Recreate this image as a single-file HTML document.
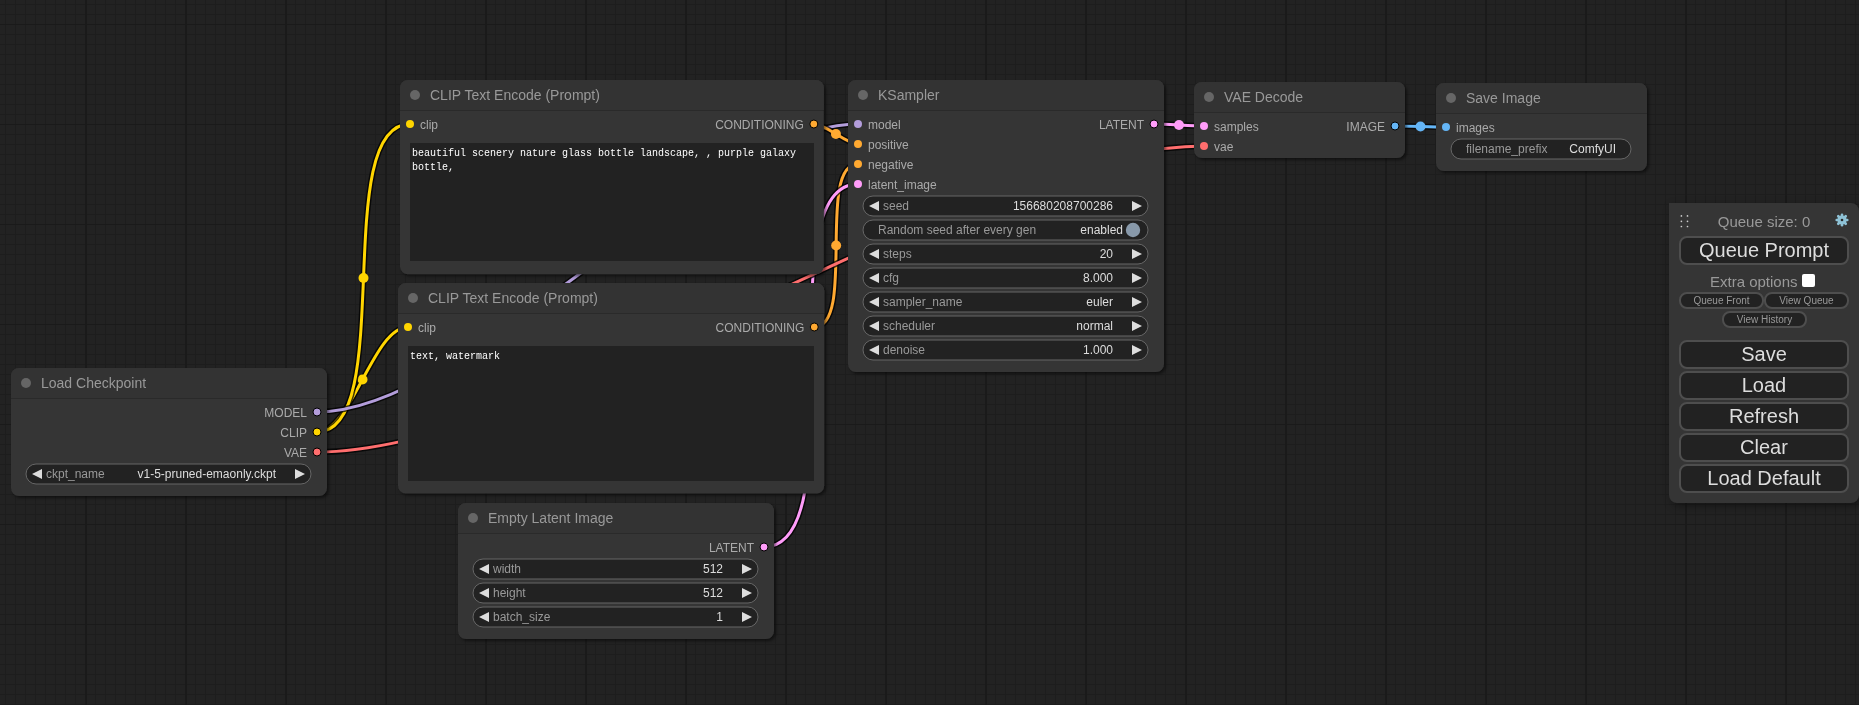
<!DOCTYPE html><html><head><meta charset="utf-8"><style>
html,body{margin:0;padding:0;width:1859px;height:705px;overflow:hidden;background:#222;}
svg.c{position:absolute;left:0;top:0;will-change:transform;}
text{font-family:"Liberation Sans",sans-serif;}
.ta{position:absolute;background:#222;color:#fff;font-family:"Liberation Mono",monospace;font-size:10px;line-height:14px;padding:4px 2px 2px 2px;will-change:transform;box-sizing:border-box;white-space:pre-wrap;word-wrap:break-word;overflow:hidden;}
.menu{position:absolute;left:1669px;top:203px;width:190px;height:300px;box-sizing:border-box;background:#353535;border-radius:0 8px 8px 8px;font-family:"Liberation Sans",sans-serif;color:#999;box-shadow:3px 3px 8px rgba(0,0,0,0.4);will-change:transform;}
.menu button{font-family:"Liberation Sans",sans-serif;display:block;box-sizing:border-box;background:#222;color:#ddd;border:2px solid #4e4e4e;border-radius:8px;padding:0;margin:0;}
.menu .big{position:absolute;left:10px;width:170px;height:29px;font-size:20px;line-height:25px;}
.qs{position:absolute;left:0;top:10px;width:190px;text-align:center;font-size:15px;line-height:18px;}
.drag{position:absolute;left:12px;top:3px;width:8px;height:12px;background-image:radial-gradient(circle,#bbb 0.8px,transparent 1px);background-size:5px 5px;}
.gear{position:absolute;left:166px;top:2px;}
.extra{position:absolute;left:41px;top:70px;width:120px;text-align:left;font-size:15px;line-height:18px;}
.cb{position:absolute;left:133px;top:71px;width:13px;height:13px;box-sizing:border-box;background:#fff;border-radius:2px;}
.menu .sm{position:absolute;font-size:10px;height:16.5px;line-height:12.5px;border-width:2px;border-radius:8px;color:#999;}
.menu .sm span{position:relative;top:1px;}

.menu .qp{top:34px}
</style></head><body><svg class="c" width="1859" height="705" viewBox="0 0 1859 705"><defs><filter id="sh" x="-10%" y="-10%" width="120%" height="120%"><feDropShadow dx="2" dy="2" stdDeviation="1.5" flood-color="#000" flood-opacity="0.5"/></filter></defs><g><rect x="5" y="0" width="1" height="705" fill="#1d1d1d"/><rect x="15" y="0" width="1" height="705" fill="#1d1d1d"/><rect x="25" y="0" width="1" height="705" fill="#1d1d1d"/><rect x="35" y="0" width="1" height="705" fill="#1d1d1d"/><rect x="45" y="0" width="1" height="705" fill="#1d1d1d"/><rect x="55" y="0" width="1" height="705" fill="#1d1d1d"/><rect x="65" y="0" width="1" height="705" fill="#1d1d1d"/><rect x="75" y="0" width="1" height="705" fill="#1d1d1d"/><rect x="95" y="0" width="1" height="705" fill="#1d1d1d"/><rect x="105" y="0" width="1" height="705" fill="#1d1d1d"/><rect x="115" y="0" width="1" height="705" fill="#1d1d1d"/><rect x="125" y="0" width="1" height="705" fill="#1d1d1d"/><rect x="135" y="0" width="1" height="705" fill="#1d1d1d"/><rect x="145" y="0" width="1" height="705" fill="#1d1d1d"/><rect x="155" y="0" width="1" height="705" fill="#1d1d1d"/><rect x="165" y="0" width="1" height="705" fill="#1d1d1d"/><rect x="175" y="0" width="1" height="705" fill="#1d1d1d"/><rect x="195" y="0" width="1" height="705" fill="#1d1d1d"/><rect x="205" y="0" width="1" height="705" fill="#1d1d1d"/><rect x="215" y="0" width="1" height="705" fill="#1d1d1d"/><rect x="225" y="0" width="1" height="705" fill="#1d1d1d"/><rect x="235" y="0" width="1" height="705" fill="#1d1d1d"/><rect x="245" y="0" width="1" height="705" fill="#1d1d1d"/><rect x="255" y="0" width="1" height="705" fill="#1d1d1d"/><rect x="265" y="0" width="1" height="705" fill="#1d1d1d"/><rect x="275" y="0" width="1" height="705" fill="#1d1d1d"/><rect x="295" y="0" width="1" height="705" fill="#1d1d1d"/><rect x="305" y="0" width="1" height="705" fill="#1d1d1d"/><rect x="315" y="0" width="1" height="705" fill="#1d1d1d"/><rect x="325" y="0" width="1" height="705" fill="#1d1d1d"/><rect x="335" y="0" width="1" height="705" fill="#1d1d1d"/><rect x="345" y="0" width="1" height="705" fill="#1d1d1d"/><rect x="355" y="0" width="1" height="705" fill="#1d1d1d"/><rect x="365" y="0" width="1" height="705" fill="#1d1d1d"/><rect x="375" y="0" width="1" height="705" fill="#1d1d1d"/><rect x="395" y="0" width="1" height="705" fill="#1d1d1d"/><rect x="405" y="0" width="1" height="705" fill="#1d1d1d"/><rect x="415" y="0" width="1" height="705" fill="#1d1d1d"/><rect x="425" y="0" width="1" height="705" fill="#1d1d1d"/><rect x="435" y="0" width="1" height="705" fill="#1d1d1d"/><rect x="445" y="0" width="1" height="705" fill="#1d1d1d"/><rect x="455" y="0" width="1" height="705" fill="#1d1d1d"/><rect x="465" y="0" width="1" height="705" fill="#1d1d1d"/><rect x="475" y="0" width="1" height="705" fill="#1d1d1d"/><rect x="495" y="0" width="1" height="705" fill="#1d1d1d"/><rect x="505" y="0" width="1" height="705" fill="#1d1d1d"/><rect x="515" y="0" width="1" height="705" fill="#1d1d1d"/><rect x="525" y="0" width="1" height="705" fill="#1d1d1d"/><rect x="535" y="0" width="1" height="705" fill="#1d1d1d"/><rect x="545" y="0" width="1" height="705" fill="#1d1d1d"/><rect x="555" y="0" width="1" height="705" fill="#1d1d1d"/><rect x="565" y="0" width="1" height="705" fill="#1d1d1d"/><rect x="575" y="0" width="1" height="705" fill="#1d1d1d"/><rect x="595" y="0" width="1" height="705" fill="#1d1d1d"/><rect x="605" y="0" width="1" height="705" fill="#1d1d1d"/><rect x="615" y="0" width="1" height="705" fill="#1d1d1d"/><rect x="625" y="0" width="1" height="705" fill="#1d1d1d"/><rect x="635" y="0" width="1" height="705" fill="#1d1d1d"/><rect x="645" y="0" width="1" height="705" fill="#1d1d1d"/><rect x="655" y="0" width="1" height="705" fill="#1d1d1d"/><rect x="665" y="0" width="1" height="705" fill="#1d1d1d"/><rect x="675" y="0" width="1" height="705" fill="#1d1d1d"/><rect x="695" y="0" width="1" height="705" fill="#1d1d1d"/><rect x="705" y="0" width="1" height="705" fill="#1d1d1d"/><rect x="715" y="0" width="1" height="705" fill="#1d1d1d"/><rect x="725" y="0" width="1" height="705" fill="#1d1d1d"/><rect x="735" y="0" width="1" height="705" fill="#1d1d1d"/><rect x="745" y="0" width="1" height="705" fill="#1d1d1d"/><rect x="755" y="0" width="1" height="705" fill="#1d1d1d"/><rect x="765" y="0" width="1" height="705" fill="#1d1d1d"/><rect x="775" y="0" width="1" height="705" fill="#1d1d1d"/><rect x="795" y="0" width="1" height="705" fill="#1d1d1d"/><rect x="805" y="0" width="1" height="705" fill="#1d1d1d"/><rect x="815" y="0" width="1" height="705" fill="#1d1d1d"/><rect x="825" y="0" width="1" height="705" fill="#1d1d1d"/><rect x="835" y="0" width="1" height="705" fill="#1d1d1d"/><rect x="845" y="0" width="1" height="705" fill="#1d1d1d"/><rect x="855" y="0" width="1" height="705" fill="#1d1d1d"/><rect x="865" y="0" width="1" height="705" fill="#1d1d1d"/><rect x="875" y="0" width="1" height="705" fill="#1d1d1d"/><rect x="895" y="0" width="1" height="705" fill="#1d1d1d"/><rect x="905" y="0" width="1" height="705" fill="#1d1d1d"/><rect x="915" y="0" width="1" height="705" fill="#1d1d1d"/><rect x="925" y="0" width="1" height="705" fill="#1d1d1d"/><rect x="935" y="0" width="1" height="705" fill="#1d1d1d"/><rect x="945" y="0" width="1" height="705" fill="#1d1d1d"/><rect x="955" y="0" width="1" height="705" fill="#1d1d1d"/><rect x="965" y="0" width="1" height="705" fill="#1d1d1d"/><rect x="975" y="0" width="1" height="705" fill="#1d1d1d"/><rect x="995" y="0" width="1" height="705" fill="#1d1d1d"/><rect x="1005" y="0" width="1" height="705" fill="#1d1d1d"/><rect x="1015" y="0" width="1" height="705" fill="#1d1d1d"/><rect x="1025" y="0" width="1" height="705" fill="#1d1d1d"/><rect x="1035" y="0" width="1" height="705" fill="#1d1d1d"/><rect x="1045" y="0" width="1" height="705" fill="#1d1d1d"/><rect x="1055" y="0" width="1" height="705" fill="#1d1d1d"/><rect x="1065" y="0" width="1" height="705" fill="#1d1d1d"/><rect x="1075" y="0" width="1" height="705" fill="#1d1d1d"/><rect x="1095" y="0" width="1" height="705" fill="#1d1d1d"/><rect x="1105" y="0" width="1" height="705" fill="#1d1d1d"/><rect x="1115" y="0" width="1" height="705" fill="#1d1d1d"/><rect x="1125" y="0" width="1" height="705" fill="#1d1d1d"/><rect x="1135" y="0" width="1" height="705" fill="#1d1d1d"/><rect x="1145" y="0" width="1" height="705" fill="#1d1d1d"/><rect x="1155" y="0" width="1" height="705" fill="#1d1d1d"/><rect x="1165" y="0" width="1" height="705" fill="#1d1d1d"/><rect x="1175" y="0" width="1" height="705" fill="#1d1d1d"/><rect x="1195" y="0" width="1" height="705" fill="#1d1d1d"/><rect x="1205" y="0" width="1" height="705" fill="#1d1d1d"/><rect x="1215" y="0" width="1" height="705" fill="#1d1d1d"/><rect x="1225" y="0" width="1" height="705" fill="#1d1d1d"/><rect x="1235" y="0" width="1" height="705" fill="#1d1d1d"/><rect x="1245" y="0" width="1" height="705" fill="#1d1d1d"/><rect x="1255" y="0" width="1" height="705" fill="#1d1d1d"/><rect x="1265" y="0" width="1" height="705" fill="#1d1d1d"/><rect x="1275" y="0" width="1" height="705" fill="#1d1d1d"/><rect x="1295" y="0" width="1" height="705" fill="#1d1d1d"/><rect x="1305" y="0" width="1" height="705" fill="#1d1d1d"/><rect x="1315" y="0" width="1" height="705" fill="#1d1d1d"/><rect x="1325" y="0" width="1" height="705" fill="#1d1d1d"/><rect x="1335" y="0" width="1" height="705" fill="#1d1d1d"/><rect x="1345" y="0" width="1" height="705" fill="#1d1d1d"/><rect x="1355" y="0" width="1" height="705" fill="#1d1d1d"/><rect x="1365" y="0" width="1" height="705" fill="#1d1d1d"/><rect x="1375" y="0" width="1" height="705" fill="#1d1d1d"/><rect x="1395" y="0" width="1" height="705" fill="#1d1d1d"/><rect x="1405" y="0" width="1" height="705" fill="#1d1d1d"/><rect x="1415" y="0" width="1" height="705" fill="#1d1d1d"/><rect x="1425" y="0" width="1" height="705" fill="#1d1d1d"/><rect x="1435" y="0" width="1" height="705" fill="#1d1d1d"/><rect x="1445" y="0" width="1" height="705" fill="#1d1d1d"/><rect x="1455" y="0" width="1" height="705" fill="#1d1d1d"/><rect x="1465" y="0" width="1" height="705" fill="#1d1d1d"/><rect x="1475" y="0" width="1" height="705" fill="#1d1d1d"/><rect x="1495" y="0" width="1" height="705" fill="#1d1d1d"/><rect x="1505" y="0" width="1" height="705" fill="#1d1d1d"/><rect x="1515" y="0" width="1" height="705" fill="#1d1d1d"/><rect x="1525" y="0" width="1" height="705" fill="#1d1d1d"/><rect x="1535" y="0" width="1" height="705" fill="#1d1d1d"/><rect x="1545" y="0" width="1" height="705" fill="#1d1d1d"/><rect x="1555" y="0" width="1" height="705" fill="#1d1d1d"/><rect x="1565" y="0" width="1" height="705" fill="#1d1d1d"/><rect x="1575" y="0" width="1" height="705" fill="#1d1d1d"/><rect x="1595" y="0" width="1" height="705" fill="#1d1d1d"/><rect x="1605" y="0" width="1" height="705" fill="#1d1d1d"/><rect x="1615" y="0" width="1" height="705" fill="#1d1d1d"/><rect x="1625" y="0" width="1" height="705" fill="#1d1d1d"/><rect x="1635" y="0" width="1" height="705" fill="#1d1d1d"/><rect x="1645" y="0" width="1" height="705" fill="#1d1d1d"/><rect x="1655" y="0" width="1" height="705" fill="#1d1d1d"/><rect x="1665" y="0" width="1" height="705" fill="#1d1d1d"/><rect x="1675" y="0" width="1" height="705" fill="#1d1d1d"/><rect x="1695" y="0" width="1" height="705" fill="#1d1d1d"/><rect x="1705" y="0" width="1" height="705" fill="#1d1d1d"/><rect x="1715" y="0" width="1" height="705" fill="#1d1d1d"/><rect x="1725" y="0" width="1" height="705" fill="#1d1d1d"/><rect x="1735" y="0" width="1" height="705" fill="#1d1d1d"/><rect x="1745" y="0" width="1" height="705" fill="#1d1d1d"/><rect x="1755" y="0" width="1" height="705" fill="#1d1d1d"/><rect x="1765" y="0" width="1" height="705" fill="#1d1d1d"/><rect x="1775" y="0" width="1" height="705" fill="#1d1d1d"/><rect x="1795" y="0" width="1" height="705" fill="#1d1d1d"/><rect x="1805" y="0" width="1" height="705" fill="#1d1d1d"/><rect x="1815" y="0" width="1" height="705" fill="#1d1d1d"/><rect x="1825" y="0" width="1" height="705" fill="#1d1d1d"/><rect x="1835" y="0" width="1" height="705" fill="#1d1d1d"/><rect x="1845" y="0" width="1" height="705" fill="#1d1d1d"/><rect x="1855" y="0" width="1" height="705" fill="#1d1d1d"/><rect x="0" y="4" width="1859" height="1" fill="#1d1d1d"/><rect x="0" y="14" width="1859" height="1" fill="#1d1d1d"/><rect x="0" y="34" width="1859" height="1" fill="#1d1d1d"/><rect x="0" y="44" width="1859" height="1" fill="#1d1d1d"/><rect x="0" y="54" width="1859" height="1" fill="#1d1d1d"/><rect x="0" y="64" width="1859" height="1" fill="#1d1d1d"/><rect x="0" y="74" width="1859" height="1" fill="#1d1d1d"/><rect x="0" y="84" width="1859" height="1" fill="#1d1d1d"/><rect x="0" y="94" width="1859" height="1" fill="#1d1d1d"/><rect x="0" y="104" width="1859" height="1" fill="#1d1d1d"/><rect x="0" y="114" width="1859" height="1" fill="#1d1d1d"/><rect x="0" y="134" width="1859" height="1" fill="#1d1d1d"/><rect x="0" y="144" width="1859" height="1" fill="#1d1d1d"/><rect x="0" y="154" width="1859" height="1" fill="#1d1d1d"/><rect x="0" y="164" width="1859" height="1" fill="#1d1d1d"/><rect x="0" y="174" width="1859" height="1" fill="#1d1d1d"/><rect x="0" y="184" width="1859" height="1" fill="#1d1d1d"/><rect x="0" y="194" width="1859" height="1" fill="#1d1d1d"/><rect x="0" y="204" width="1859" height="1" fill="#1d1d1d"/><rect x="0" y="214" width="1859" height="1" fill="#1d1d1d"/><rect x="0" y="234" width="1859" height="1" fill="#1d1d1d"/><rect x="0" y="244" width="1859" height="1" fill="#1d1d1d"/><rect x="0" y="254" width="1859" height="1" fill="#1d1d1d"/><rect x="0" y="264" width="1859" height="1" fill="#1d1d1d"/><rect x="0" y="274" width="1859" height="1" fill="#1d1d1d"/><rect x="0" y="284" width="1859" height="1" fill="#1d1d1d"/><rect x="0" y="294" width="1859" height="1" fill="#1d1d1d"/><rect x="0" y="304" width="1859" height="1" fill="#1d1d1d"/><rect x="0" y="314" width="1859" height="1" fill="#1d1d1d"/><rect x="0" y="334" width="1859" height="1" fill="#1d1d1d"/><rect x="0" y="344" width="1859" height="1" fill="#1d1d1d"/><rect x="0" y="354" width="1859" height="1" fill="#1d1d1d"/><rect x="0" y="364" width="1859" height="1" fill="#1d1d1d"/><rect x="0" y="374" width="1859" height="1" fill="#1d1d1d"/><rect x="0" y="384" width="1859" height="1" fill="#1d1d1d"/><rect x="0" y="394" width="1859" height="1" fill="#1d1d1d"/><rect x="0" y="404" width="1859" height="1" fill="#1d1d1d"/><rect x="0" y="414" width="1859" height="1" fill="#1d1d1d"/><rect x="0" y="434" width="1859" height="1" fill="#1d1d1d"/><rect x="0" y="444" width="1859" height="1" fill="#1d1d1d"/><rect x="0" y="454" width="1859" height="1" fill="#1d1d1d"/><rect x="0" y="464" width="1859" height="1" fill="#1d1d1d"/><rect x="0" y="474" width="1859" height="1" fill="#1d1d1d"/><rect x="0" y="484" width="1859" height="1" fill="#1d1d1d"/><rect x="0" y="494" width="1859" height="1" fill="#1d1d1d"/><rect x="0" y="504" width="1859" height="1" fill="#1d1d1d"/><rect x="0" y="514" width="1859" height="1" fill="#1d1d1d"/><rect x="0" y="534" width="1859" height="1" fill="#1d1d1d"/><rect x="0" y="544" width="1859" height="1" fill="#1d1d1d"/><rect x="0" y="554" width="1859" height="1" fill="#1d1d1d"/><rect x="0" y="564" width="1859" height="1" fill="#1d1d1d"/><rect x="0" y="574" width="1859" height="1" fill="#1d1d1d"/><rect x="0" y="584" width="1859" height="1" fill="#1d1d1d"/><rect x="0" y="594" width="1859" height="1" fill="#1d1d1d"/><rect x="0" y="604" width="1859" height="1" fill="#1d1d1d"/><rect x="0" y="614" width="1859" height="1" fill="#1d1d1d"/><rect x="0" y="634" width="1859" height="1" fill="#1d1d1d"/><rect x="0" y="644" width="1859" height="1" fill="#1d1d1d"/><rect x="0" y="654" width="1859" height="1" fill="#1d1d1d"/><rect x="0" y="664" width="1859" height="1" fill="#1d1d1d"/><rect x="0" y="674" width="1859" height="1" fill="#1d1d1d"/><rect x="0" y="684" width="1859" height="1" fill="#1d1d1d"/><rect x="0" y="694" width="1859" height="1" fill="#1d1d1d"/><rect x="0" y="704" width="1859" height="1" fill="#1d1d1d"/><rect x="85" y="0" width="2" height="705" fill="#1a1a1a"/><rect x="185" y="0" width="2" height="705" fill="#1a1a1a"/><rect x="285" y="0" width="2" height="705" fill="#1a1a1a"/><rect x="385" y="0" width="2" height="705" fill="#1a1a1a"/><rect x="485" y="0" width="2" height="705" fill="#1a1a1a"/><rect x="585" y="0" width="2" height="705" fill="#1a1a1a"/><rect x="685" y="0" width="2" height="705" fill="#1a1a1a"/><rect x="785" y="0" width="2" height="705" fill="#1a1a1a"/><rect x="885" y="0" width="2" height="705" fill="#1a1a1a"/><rect x="985" y="0" width="2" height="705" fill="#1a1a1a"/><rect x="1085" y="0" width="2" height="705" fill="#1a1a1a"/><rect x="1185" y="0" width="2" height="705" fill="#1a1a1a"/><rect x="1285" y="0" width="2" height="705" fill="#1a1a1a"/><rect x="1385" y="0" width="2" height="705" fill="#1a1a1a"/><rect x="1485" y="0" width="2" height="705" fill="#1a1a1a"/><rect x="1585" y="0" width="2" height="705" fill="#1a1a1a"/><rect x="1685" y="0" width="2" height="705" fill="#1a1a1a"/><rect x="1785" y="0" width="2" height="705" fill="#1a1a1a"/><rect x="0" y="24" width="1859" height="1" fill="#1a1a1a"/><rect x="0" y="124" width="1859" height="1" fill="#1a1a1a"/><rect x="0" y="224" width="1859" height="1" fill="#1a1a1a"/><rect x="0" y="324" width="1859" height="1" fill="#1a1a1a"/><rect x="0" y="424" width="1859" height="1" fill="#1a1a1a"/><rect x="0" y="524" width="1859" height="1" fill="#1a1a1a"/><rect x="0" y="624" width="1859" height="1" fill="#1a1a1a"/></g><g><path d="M317 432C351.74 432 373.26 327 408 327" stroke="rgba(0,0,0,0.75)" stroke-width="6" fill="none" stroke-linejoin="round"/><path d="M317 432C351.74 432 373.26 327 408 327" stroke="#FFD500" stroke-width="3" fill="none"/><circle cx="362.5" cy="379.5" r="5" fill="#FFD500"/><path d="M317 432C397.43 432 329.57 124 410 124" stroke="rgba(0,0,0,0.75)" stroke-width="6" fill="none" stroke-linejoin="round"/><path d="M317 432C397.43 432 329.57 124 410 124" stroke="#FFD500" stroke-width="3" fill="none"/><circle cx="363.5" cy="278" r="5" fill="#FFD500"/><path d="M317 412C470.22 412 704.78 124 858 124" stroke="rgba(0,0,0,0.75)" stroke-width="6" fill="none" stroke-linejoin="round"/><path d="M317 412C470.22 412 704.78 124 858 124" stroke="#B39DDB" stroke-width="3" fill="none"/><circle cx="587.5" cy="268" r="5" fill="#B39DDB"/><path d="M813.85 124C825.97 124 845.88 144 858 144" stroke="rgba(0,0,0,0.75)" stroke-width="6" fill="none" stroke-linejoin="round"/><path d="M813.85 124C825.97 124 845.88 144 858 144" stroke="#FFA931" stroke-width="3" fill="none"/><circle cx="835.92" cy="134" r="5" fill="#FFA931"/><path d="M814.28 327C856.47 327 815.81 164 858 164" stroke="rgba(0,0,0,0.75)" stroke-width="6" fill="none" stroke-linejoin="round"/><path d="M814.28 327C856.47 327 815.81 164 858 164" stroke="#FFA931" stroke-width="3" fill="none"/><circle cx="836.14" cy="245.5" r="5" fill="#FFA931"/><path d="M764 547C857.74 547 764.26 184 858 184" stroke="rgba(0,0,0,0.75)" stroke-width="6" fill="none" stroke-linejoin="round"/><path d="M764 547C857.74 547 764.26 184 858 184" stroke="#FF9CF9" stroke-width="3" fill="none"/><circle cx="811" cy="365.5" r="5" fill="#FF9CF9"/><path d="M1154 124C1166.51 124 1191.49 126 1204 126" stroke="rgba(0,0,0,0.75)" stroke-width="6" fill="none" stroke-linejoin="round"/><path d="M1154 124C1166.51 124 1191.49 126 1204 126" stroke="#FF9CF9" stroke-width="3" fill="none"/><circle cx="1179" cy="125" r="5" fill="#FF9CF9"/><path d="M317 452C551.57 452 969.43 146 1204 146" stroke="rgba(0,0,0,0.75)" stroke-width="6" fill="none" stroke-linejoin="round"/><path d="M317 452C551.57 452 969.43 146 1204 146" stroke="#FF6E6E" stroke-width="3" fill="none"/><circle cx="760.5" cy="299" r="5" fill="#FF6E6E"/><path d="M1395 126C1407.75 126 1433.25 127 1446 127" stroke="rgba(0,0,0,0.75)" stroke-width="6" fill="none" stroke-linejoin="round"/><path d="M1395 126C1407.75 126 1433.25 127 1446 127" stroke="#64B5F6" stroke-width="3" fill="none"/><circle cx="1420.5" cy="126.5" r="5" fill="#64B5F6"/></g><g><path d="M19 368h300a8 8 0 0 1 8 8v112a8 8 0 0 1 -8 8h-300a8 8 0 0 1 -8 -8v-112a8 8 0 0 1 8 -8z" fill="#353535" filter="url(#sh)"/><path d="M19 368h300a8 8 0 0 1 8 8v22h-316v-22a8 8 0 0 1 8 -8z" fill="#333"/><rect x="11" y="398" width="316" height="1" fill="rgba(0,0,0,0.2)"/><circle cx="26" cy="383" r="5" fill="#666"/><text x="41" y="388" font-size="14" fill="#999">Load Checkpoint</text><circle cx="317" cy="412" r="4" fill="#B39DDB" stroke="#000" stroke-width="1"/><text x="307" y="417" font-size="12" fill="#AAA" text-anchor="end">MODEL</text><circle cx="317" cy="432" r="4" fill="#FFD500" stroke="#000" stroke-width="1"/><text x="307" y="437" font-size="12" fill="#AAA" text-anchor="end">CLIP</text><circle cx="317" cy="452" r="4" fill="#FF6E6E" stroke="#000" stroke-width="1"/><text x="307" y="457" font-size="12" fill="#AAA" text-anchor="end">VAE</text><rect x="26" y="464" width="285" height="20" rx="10" ry="10" fill="#222" stroke="#666" stroke-width="1"/><path d="M42 469L32 474L42 479z" fill="#DDD"/><path d="M295 469L305 474L295 479z" fill="#DDD"/><text x="46" y="478" font-size="12" fill="#999">ckpt_name</text><text x="276" y="478" font-size="12" fill="#DDD" text-anchor="end">v1-5-pruned-emaonly.ckpt</text><path d="M408 80h407.85a8 8 0 0 1 8 8v178.31a8 8 0 0 1 -8 8h-407.85a8 8 0 0 1 -8 -8v-178.31a8 8 0 0 1 8 -8z" fill="#353535" filter="url(#sh)"/><path d="M408 80h407.85a8 8 0 0 1 8 8v22h-423.85v-22a8 8 0 0 1 8 -8z" fill="#333"/><rect x="400" y="110" width="423.85" height="1" fill="rgba(0,0,0,0.2)"/><circle cx="415" cy="95" r="5" fill="#666"/><text x="430" y="100" font-size="14" fill="#999">CLIP Text Encode (Prompt)</text><circle cx="410" cy="124" r="4" fill="#FFD500"/><text x="420" y="129" font-size="12" fill="#AAA">clip</text><circle cx="813.85" cy="124" r="4" fill="#FFA931" stroke="#000" stroke-width="1"/><text x="803.85" y="129" font-size="12" fill="#AAA" text-anchor="end">CONDITIONING</text><path d="M406 283h410.28a8 8 0 0 1 8 8v194.61a8 8 0 0 1 -8 8h-410.28a8 8 0 0 1 -8 -8v-194.61a8 8 0 0 1 8 -8z" fill="#353535" filter="url(#sh)"/><path d="M406 283h410.28a8 8 0 0 1 8 8v22h-426.28v-22a8 8 0 0 1 8 -8z" fill="#333"/><rect x="398" y="313" width="426.28" height="1" fill="rgba(0,0,0,0.2)"/><circle cx="413" cy="298" r="5" fill="#666"/><text x="428" y="303" font-size="14" fill="#999">CLIP Text Encode (Prompt)</text><circle cx="408" cy="327" r="4" fill="#FFD500"/><text x="418" y="332" font-size="12" fill="#AAA">clip</text><circle cx="814.28" cy="327" r="4" fill="#FFA931" stroke="#000" stroke-width="1"/><text x="804.28" y="332" font-size="12" fill="#AAA" text-anchor="end">CONDITIONING</text><path d="M856 80h300a8 8 0 0 1 8 8v276a8 8 0 0 1 -8 8h-300a8 8 0 0 1 -8 -8v-276a8 8 0 0 1 8 -8z" fill="#353535" filter="url(#sh)"/><path d="M856 80h300a8 8 0 0 1 8 8v22h-316v-22a8 8 0 0 1 8 -8z" fill="#333"/><rect x="848" y="110" width="316" height="1" fill="rgba(0,0,0,0.2)"/><circle cx="863" cy="95" r="5" fill="#666"/><text x="878" y="100" font-size="14" fill="#999">KSampler</text><circle cx="858" cy="124" r="4" fill="#B39DDB"/><text x="868" y="129" font-size="12" fill="#AAA">model</text><circle cx="858" cy="144" r="4" fill="#FFA931"/><text x="868" y="149" font-size="12" fill="#AAA">positive</text><circle cx="858" cy="164" r="4" fill="#FFA931"/><text x="868" y="169" font-size="12" fill="#AAA">negative</text><circle cx="858" cy="184" r="4" fill="#FF9CF9"/><text x="868" y="189" font-size="12" fill="#AAA">latent_image</text><circle cx="1154" cy="124" r="4" fill="#FF9CF9" stroke="#000" stroke-width="1"/><text x="1144" y="129" font-size="12" fill="#AAA" text-anchor="end">LATENT</text><rect x="863" y="196" width="285" height="20" rx="10" ry="10" fill="#222" stroke="#666" stroke-width="1"/><path d="M879 201L869 206L879 211z" fill="#DDD"/><path d="M1132 201L1142 206L1132 211z" fill="#DDD"/><text x="883" y="210" font-size="12" fill="#999">seed</text><text x="1113" y="210" font-size="12" fill="#DDD" text-anchor="end">156680208700286</text><rect x="863" y="220" width="285" height="20" rx="10" ry="10" fill="#222" stroke="#666" stroke-width="1"/><circle cx="1133" cy="230" r="7.2" fill="#89A"/><text x="878" y="234" font-size="12" fill="#999">Random seed after every gen</text><text x="1123" y="234" font-size="12" fill="#DDD" text-anchor="end">enabled</text><rect x="863" y="244" width="285" height="20" rx="10" ry="10" fill="#222" stroke="#666" stroke-width="1"/><path d="M879 249L869 254L879 259z" fill="#DDD"/><path d="M1132 249L1142 254L1132 259z" fill="#DDD"/><text x="883" y="258" font-size="12" fill="#999">steps</text><text x="1113" y="258" font-size="12" fill="#DDD" text-anchor="end">20</text><rect x="863" y="268" width="285" height="20" rx="10" ry="10" fill="#222" stroke="#666" stroke-width="1"/><path d="M879 273L869 278L879 283z" fill="#DDD"/><path d="M1132 273L1142 278L1132 283z" fill="#DDD"/><text x="883" y="282" font-size="12" fill="#999">cfg</text><text x="1113" y="282" font-size="12" fill="#DDD" text-anchor="end">8.000</text><rect x="863" y="292" width="285" height="20" rx="10" ry="10" fill="#222" stroke="#666" stroke-width="1"/><path d="M879 297L869 302L879 307z" fill="#DDD"/><path d="M1132 297L1142 302L1132 307z" fill="#DDD"/><text x="883" y="306" font-size="12" fill="#999">sampler_name</text><text x="1113" y="306" font-size="12" fill="#DDD" text-anchor="end">euler</text><rect x="863" y="316" width="285" height="20" rx="10" ry="10" fill="#222" stroke="#666" stroke-width="1"/><path d="M879 321L869 326L879 331z" fill="#DDD"/><path d="M1132 321L1142 326L1132 331z" fill="#DDD"/><text x="883" y="330" font-size="12" fill="#999">scheduler</text><text x="1113" y="330" font-size="12" fill="#DDD" text-anchor="end">normal</text><rect x="863" y="340" width="285" height="20" rx="10" ry="10" fill="#222" stroke="#666" stroke-width="1"/><path d="M879 345L869 350L879 355z" fill="#DDD"/><path d="M1132 345L1142 350L1132 355z" fill="#DDD"/><text x="883" y="354" font-size="12" fill="#999">denoise</text><text x="1113" y="354" font-size="12" fill="#DDD" text-anchor="end">1.000</text><path d="M1202 82h195a8 8 0 0 1 8 8v60a8 8 0 0 1 -8 8h-195a8 8 0 0 1 -8 -8v-60a8 8 0 0 1 8 -8z" fill="#353535" filter="url(#sh)"/><path d="M1202 82h195a8 8 0 0 1 8 8v22h-211v-22a8 8 0 0 1 8 -8z" fill="#333"/><rect x="1194" y="112" width="211" height="1" fill="rgba(0,0,0,0.2)"/><circle cx="1209" cy="97" r="5" fill="#666"/><text x="1224" y="102" font-size="14" fill="#999">VAE Decode</text><circle cx="1204" cy="126" r="4" fill="#FF9CF9"/><text x="1214" y="131" font-size="12" fill="#AAA">samples</text><circle cx="1204" cy="146" r="4" fill="#FF6E6E"/><text x="1214" y="151" font-size="12" fill="#AAA">vae</text><circle cx="1395" cy="126" r="4" fill="#64B5F6" stroke="#000" stroke-width="1"/><text x="1385" y="131" font-size="12" fill="#AAA" text-anchor="end">IMAGE</text><path d="M1444 83h195a8 8 0 0 1 8 8v72a8 8 0 0 1 -8 8h-195a8 8 0 0 1 -8 -8v-72a8 8 0 0 1 8 -8z" fill="#353535" filter="url(#sh)"/><path d="M1444 83h195a8 8 0 0 1 8 8v22h-211v-22a8 8 0 0 1 8 -8z" fill="#333"/><rect x="1436" y="113" width="211" height="1" fill="rgba(0,0,0,0.2)"/><circle cx="1451" cy="98" r="5" fill="#666"/><text x="1466" y="103" font-size="14" fill="#999">Save Image</text><circle cx="1446" cy="127" r="4" fill="#64B5F6"/><text x="1456" y="132" font-size="12" fill="#AAA">images</text><rect x="1451" y="139" width="180" height="20" rx="10" ry="10" fill="#222" stroke="#666" stroke-width="1"/><text x="1466" y="153" font-size="12" fill="#999">filename_prefix</text><text x="1616" y="153" font-size="12" fill="#DDD" text-anchor="end">ComfyUI</text><path d="M466 503h300a8 8 0 0 1 8 8v120a8 8 0 0 1 -8 8h-300a8 8 0 0 1 -8 -8v-120a8 8 0 0 1 8 -8z" fill="#353535" filter="url(#sh)"/><path d="M466 503h300a8 8 0 0 1 8 8v22h-316v-22a8 8 0 0 1 8 -8z" fill="#333"/><rect x="458" y="533" width="316" height="1" fill="rgba(0,0,0,0.2)"/><circle cx="473" cy="518" r="5" fill="#666"/><text x="488" y="523" font-size="14" fill="#999">Empty Latent Image</text><circle cx="764" cy="547" r="4" fill="#FF9CF9" stroke="#000" stroke-width="1"/><text x="754" y="552" font-size="12" fill="#AAA" text-anchor="end">LATENT</text><rect x="473" y="559" width="285" height="20" rx="10" ry="10" fill="#222" stroke="#666" stroke-width="1"/><path d="M489 564L479 569L489 574z" fill="#DDD"/><path d="M742 564L752 569L742 574z" fill="#DDD"/><text x="493" y="573" font-size="12" fill="#999">width</text><text x="723" y="573" font-size="12" fill="#DDD" text-anchor="end">512</text><rect x="473" y="583" width="285" height="20" rx="10" ry="10" fill="#222" stroke="#666" stroke-width="1"/><path d="M489 588L479 593L489 598z" fill="#DDD"/><path d="M742 588L752 593L742 598z" fill="#DDD"/><text x="493" y="597" font-size="12" fill="#999">height</text><text x="723" y="597" font-size="12" fill="#DDD" text-anchor="end">512</text><rect x="473" y="607" width="285" height="20" rx="10" ry="10" fill="#222" stroke="#666" stroke-width="1"/><path d="M489 612L479 617L489 622z" fill="#DDD"/><path d="M742 612L752 617L742 622z" fill="#DDD"/><text x="493" y="621" font-size="12" fill="#999">batch_size</text><text x="723" y="621" font-size="12" fill="#DDD" text-anchor="end">1</text></g></svg><div class="ta" style="left:410px;top:143px;width:404px;height:118px">beautiful scenery nature glass bottle landscape, , purple galaxy bottle,</div><div class="ta" style="left:408px;top:346px;width:406px;height:135px">text, watermark</div><div class="menu">
<div class="qs">Queue size: 0</div><svg style="position:absolute;left:10px;top:10px" width="12" height="20"><circle cx="2.4" cy="2.9" r="0.85" fill="#ccc"/><circle cx="2.4" cy="8.3" r="0.85" fill="#ccc"/><circle cx="2.4" cy="13.5" r="0.85" fill="#ccc"/><circle cx="8.5" cy="2.9" r="0.85" fill="#ccc"/><circle cx="8.5" cy="8.3" r="0.85" fill="#ccc"/><circle cx="8.5" cy="13.5" r="0.85" fill="#ccc"/></svg>
<svg class="gear" style="position:absolute;left:164.8px;top:8.8px" width="16" height="16" viewBox="-8 -8 16 16"><circle cx="0" cy="0" r="4.6" fill="#8ec2d6"/><line x1="-5.30" y1="-0.00" x2="5.30" y2="0.00" stroke="#8ec2d6" stroke-width="2.6" stroke-linecap="round"/><line x1="-3.75" y1="-3.75" x2="3.75" y2="3.75" stroke="#8ec2d6" stroke-width="2.6" stroke-linecap="round"/><line x1="-0.00" y1="-5.30" x2="0.00" y2="5.30" stroke="#8ec2d6" stroke-width="2.6" stroke-linecap="round"/><line x1="3.75" y1="-3.75" x2="-3.75" y2="3.75" stroke="#8ec2d6" stroke-width="2.6" stroke-linecap="round"/><circle cx="0" cy="0" r="1.3" fill="#2a2a2a"/></svg>
<button class="big" style="top:33px">Queue Prompt</button>
<div class="extra">Extra options</div><span class="cb"></span>
<button class="sm" style="left:10px;top:89px;width:85px"><span>Queue Front</span></button>
<button class="sm" style="left:95px;top:89px;width:85px"><span>View Queue</span></button>
<button class="sm" style="left:53px;top:108px;width:85px"><span>View History</span></button>
<button class="big" style="top:137px">Save</button>
<button class="big" style="top:168px">Load</button>
<button class="big" style="top:199px">Refresh</button>
<button class="big" style="top:230px">Clear</button>
<button class="big" style="top:261px">Load Default</button>
</div></body></html>
